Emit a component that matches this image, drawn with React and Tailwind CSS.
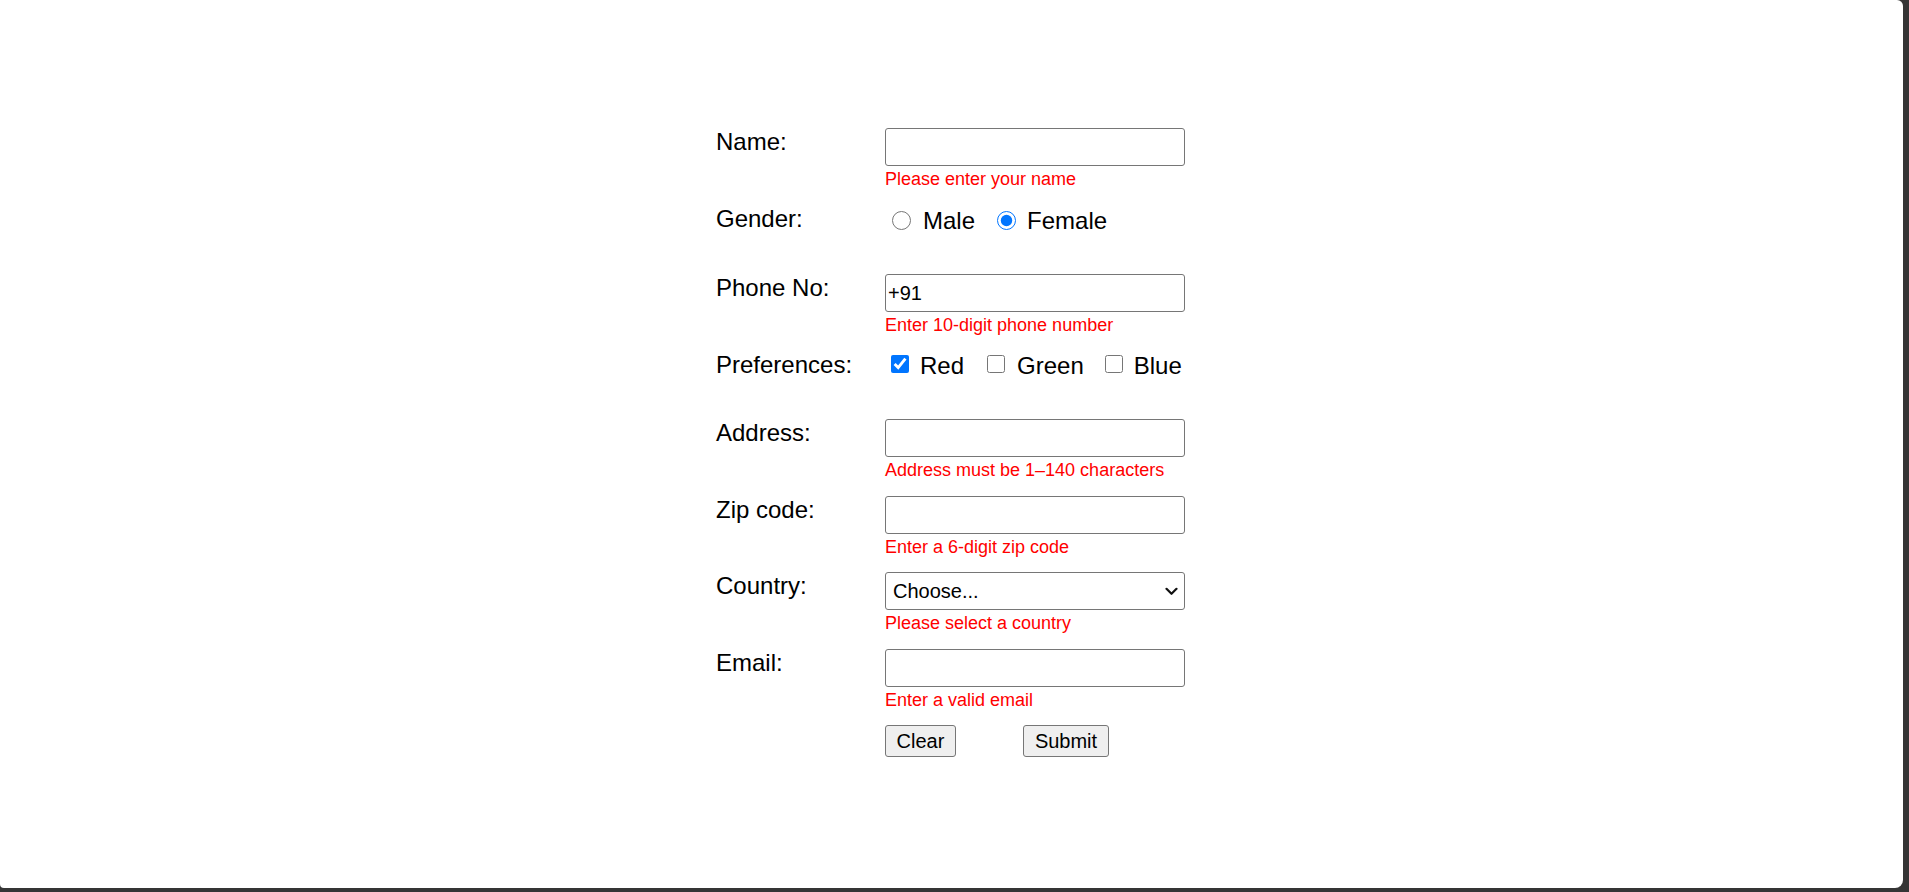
import React from "react";

function Label({ children }) {
  return (
    <div className="w-[169px] shrink-0 text-[24px] leading-[28px] text-black">
      {children}
    </div>
  );
}

function ErrorText({ children }) {
  return (
    <div className="mt-[2px] h-[22px] text-[18px] leading-[22px] text-[#ff0000] whitespace-nowrap">
      {children}
    </div>
  );
}

function TextRow({ label, error, mb, value }) {
  return (
    <div className={`flex ${mb}`}>
      <Label>{label}</Label>
      <div className="flex flex-col">
        <input
          type="text"
          defaultValue={value}
          className="box-border h-[38px] w-[300px] rounded-[3px] border border-[#767676] bg-white px-[2px] text-[20px] text-black outline-none"
        />
        <ErrorText>{error}</ErrorText>
      </div>
    </div>
  );
}

export default function App() {
  return (
    <div className="flex h-screen w-full bg-[#353535] pb-[4px] pr-[6px] font-['Liberation_Sans',Arial,sans-serif]">
      <div className="flex-1 rounded-tr-[6px] rounded-br-[8px] rounded-bl-[4px] bg-white pt-[128px]">
        <form className="ml-[716px] flex flex-col" onSubmit={(e) => e.preventDefault()}>
          <TextRow label="Name:" error="Please enter your name" mb="mb-[15px]" />

          <div className="flex mb-[15px]">
            <Label>Gender:</Label>
            <div className="flex flex-col">
              <div className="flex h-[30px] items-center text-[24px] text-black">
                <input
                  type="radio"
                  name="gender"
                  className="m-0 ml-[7px] h-[19px] w-[19px] accent-[#0075ff]"
                />
                <span className="ml-[12px] mt-[2px] leading-[30px]">Male</span>
                <input
                  type="radio"
                  name="gender"
                  defaultChecked
                  className="m-0 ml-[22px] h-[19px] w-[19px] accent-[#0075ff]"
                />
                <span className="ml-[11px] mt-[2px] leading-[30px]">Female</span>
              </div>
              <ErrorText />
            </div>
          </div>

          <TextRow label="Phone No:" error="Enter 10-digit phone number" mb="mb-[15px]" value="+91" />

          <div className="flex mb-[15px]">
            <Label>Preferences:</Label>
            <div className="flex flex-col">
              <div className="flex h-[29px] items-start text-[24px] leading-[29px] text-black">
                <input
                  type="checkbox"
                  defaultChecked
                  className="m-0 ml-[6px] mt-[4px] h-[18px] w-[18px] accent-[#0075ff]"
                />
                <span className="ml-[11px]">Red</span>
                <input
                  type="checkbox"
                  className="m-0 ml-[23px] mt-[4px] h-[18px] w-[18px] accent-[#0075ff]"
                />
                <span className="ml-[12px]">Green</span>
                <input
                  type="checkbox"
                  className="m-0 ml-[21px] mt-[4px] h-[18px] w-[18px] accent-[#0075ff]"
                />
                <span className="ml-[11px]">Blue</span>
              </div>
              <ErrorText />
            </div>
          </div>

          <TextRow label="Address:" error="Address must be 1–140 characters" mb="mb-[15px]" />
          <TextRow label="Zip code:" error="Enter a 6-digit zip code" mb="mb-[14px]" />

          <div className="flex mb-[15px]">
            <Label>Country:</Label>
            <div className="flex flex-col">
              <div className="relative h-[38px] w-[300px]">
                <select
                  defaultValue=""
                  className="box-border h-[38px] w-[300px] appearance-none rounded-[3px] border border-[#767676] bg-white pl-[7px] text-[20px] text-black outline-none"
                >
                  <option value="">Choose...</option>
                  <option value="in">India</option>
                  <option value="us">United States</option>
                </select>
                <svg
                  className="pointer-events-none absolute right-[7px] top-[15px]"
                  width="13"
                  height="9"
                  viewBox="0 0 13 9"
                  fill="none"
                >
                  <path d="M1.5 1.8 L6.5 6.8 L11.5 1.8" stroke="#111" strokeWidth="2.2" strokeLinecap="round" strokeLinejoin="round" />
                </svg>
              </div>
              <ErrorText>Please select a country</ErrorText>
            </div>
          </div>

          <TextRow label="Email:" error="Enter a valid email" mb="mb-[14px]" />

          <div className="flex pl-[169px]">
            <button
              type="button"
              className="box-border h-[32px] w-[71px] rounded-[3px] border border-[#767676] bg-[#efefef] text-[20px] text-black"
            >
              Clear
            </button>
            <button
              type="submit"
              className="ml-[67px] box-border h-[32px] w-[86px] rounded-[3px] border border-[#767676] bg-[#efefef] text-[20px] text-black"
            >
              Submit
            </button>
          </div>
        </form>
      </div>
    </div>
  );
}
